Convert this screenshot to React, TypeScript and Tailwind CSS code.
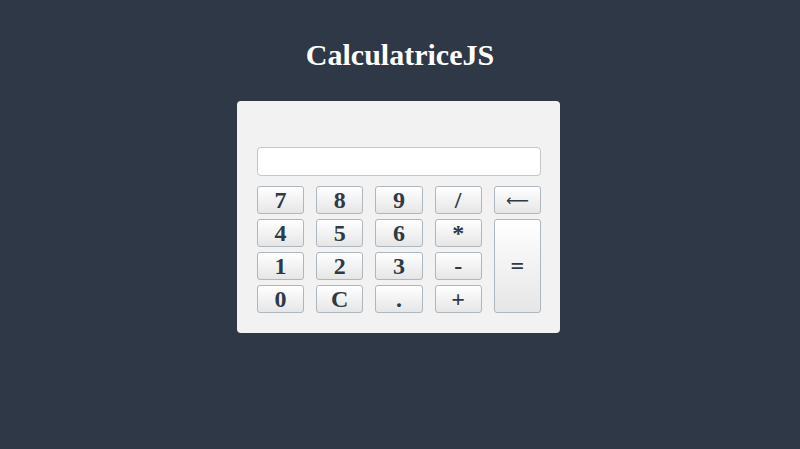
import React from "react";

const btn =
  "flex items-center justify-center rounded-[3px] border border-[#aeb6be] bg-gradient-to-b from-[#ffffff] to-[#e6e6e6] text-[#2f3a47] font-bold text-[24px] leading-none shadow-[inset_0_1px_0_#ffffff]";

export default function App() {
  const keys: { k: string; col: string; row: string }[] = [
    { k: "7", col: "col-start-1", row: "row-start-1" },
    { k: "8", col: "col-start-2", row: "row-start-1" },
    { k: "9", col: "col-start-3", row: "row-start-1" },
    { k: "/", col: "col-start-4", row: "row-start-1" },
    { k: "4", col: "col-start-1", row: "row-start-2" },
    { k: "5", col: "col-start-2", row: "row-start-2" },
    { k: "6", col: "col-start-3", row: "row-start-2" },
    { k: "*", col: "col-start-4", row: "row-start-2" },
    { k: "1", col: "col-start-1", row: "row-start-3" },
    { k: "2", col: "col-start-2", row: "row-start-3" },
    { k: "3", col: "col-start-3", row: "row-start-3" },
    { k: "-", col: "col-start-4", row: "row-start-3" },
    { k: "0", col: "col-start-1", row: "row-start-4" },
    { k: "C", col: "col-start-2", row: "row-start-4" },
    { k: ".", col: "col-start-3", row: "row-start-4" },
    { k: "+", col: "col-start-4", row: "row-start-4" },
  ];
  return (
    <div
      className="w-[800px] h-[449px] bg-[#2e3846] overflow-hidden pt-[38px]"
      style={{ fontFamily: '"Liberation Serif", "Times New Roman", serif' }}
    >
      <h1 className="text-center text-white font-bold text-[30px] leading-[34px]">
        CalculatriceJS
      </h1>
      <div className="ml-[237px] mt-[29px] w-[323px] h-[232px] rounded-[4px] bg-[#f2f2f2] pl-[20px] pr-[19px] pt-[46px]">
        <div className="h-[29px] w-[284px] rounded-[4px] border border-[#c6c6c6] bg-white" />
        <div className="mt-[10px] grid w-[284px] grid-cols-5 grid-rows-[28px_28px_28px_28px] gap-x-[12px] gap-y-[5px]">
          {keys.map((b) => (
            <div key={b.k} className={`${btn} ${b.col} ${b.row}`}>
              {b.k}
            </div>
          ))}
          <div
            className={`${btn} col-start-5 row-start-1 !font-normal !text-[16px] font-['DejaVu_Sans',sans-serif] pt-[2px]`}
          >
            ⟵
          </div>
          <div className={`${btn} col-start-5 row-start-2 row-span-3`}>=</div>
        </div>
      </div>
    </div>
  );
}
